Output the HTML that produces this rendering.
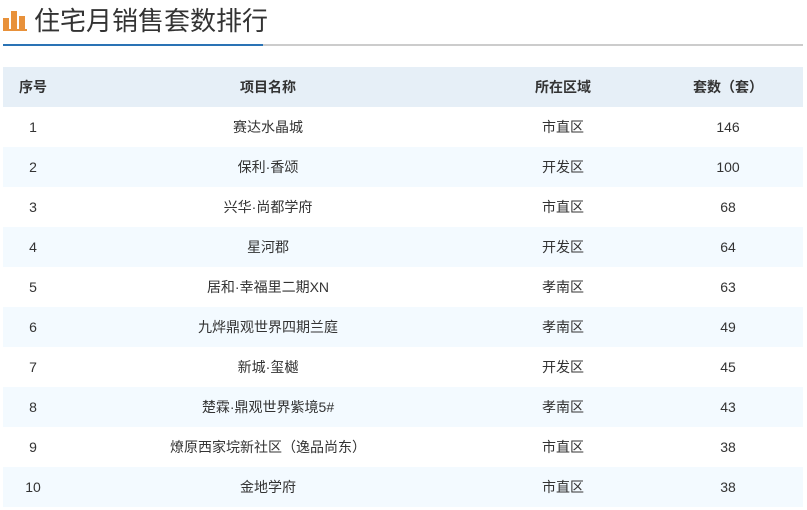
<!DOCTYPE html>
<html><head><meta charset="utf-8"><style>
body{margin:0;background:#fff;font-family:"Liberation Sans","Noto Sans CJK SC",sans-serif;width:807px;height:510px;overflow:hidden;position:relative}
.title{position:absolute;left:34px;top:4px;font-size:26px;color:#333;line-height:34px}
.icon{position:absolute;left:3px;top:10px}
.line{position:absolute;left:3px;top:44px;width:800px;height:2px;background:#ccc}
.line b{display:block;width:260px;height:2px;background:#2a73b5}
table{position:absolute;left:3px;top:67px;width:800px;border-collapse:collapse;font-size:14px;color:#333}
td,th{height:40px;padding:0;text-align:center}
th{background:#e6eff7;font-weight:bold}
tr:nth-child(odd) td{background:#f3faff}
</style></head><body>
<svg class="icon" width="24" height="21" viewBox="0 0 24 21"><rect x="0" y="8" width="6" height="11" fill="#e8913a"/><rect x="8" y="1" width="6" height="18" fill="#e8913a"/><rect x="16" y="6" width="6" height="13" fill="#e8913a"/><rect x="0" y="19" width="24" height="2" fill="#e8913a"/></svg>
<div class="title">住宅月销售套数排行</div>
<div class="line"><b></b></div>
<table>
<colgroup><col style="width:60px"><col style="width:410px"><col style="width:180px"><col style="width:150px"></colgroup>
<tr><th>序号</th><th>项目名称</th><th>所在区域</th><th>套数（套）</th></tr>
<tr><td>1</td><td>赛达水晶城</td><td>市直区</td><td>146</td></tr>
<tr><td>2</td><td>保利·香颂</td><td>开发区</td><td>100</td></tr>
<tr><td>3</td><td>兴华·尚都学府</td><td>市直区</td><td>68</td></tr>
<tr><td>4</td><td>星河郡</td><td>开发区</td><td>64</td></tr>
<tr><td>5</td><td>居和·幸福里二期XN</td><td>孝南区</td><td>63</td></tr>
<tr><td>6</td><td>九烨鼎观世界四期兰庭</td><td>孝南区</td><td>49</td></tr>
<tr><td>7</td><td>新城·玺樾</td><td>开发区</td><td>45</td></tr>
<tr><td>8</td><td>楚霖·鼎观世界紫境5#</td><td>孝南区</td><td>43</td></tr>
<tr><td>9</td><td>燎原西家垸新社区（逸品尚东）</td><td>市直区</td><td>38</td></tr>
<tr><td>10</td><td>金地学府</td><td>市直区</td><td>38</td></tr>
</table>
</body></html>
